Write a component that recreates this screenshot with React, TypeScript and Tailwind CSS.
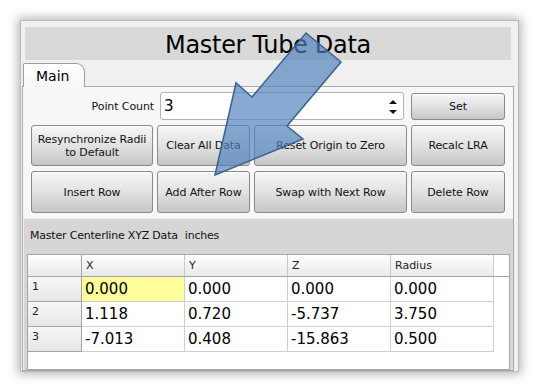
import React from 'react';

const rows = [
  ['0.000', '0.000', '0.000', '0.000'],
  ['1.118', '0.720', '-5.737', '3.750'],
  ['-7.013', '0.408', '-15.863', '0.500'],
];

const headers = ['X', 'Y', 'Z', 'Radius'];

function Btn({ children, className = '' }: { children: React.ReactNode; className?: string }) {
  return (
    <button
      type="button"
      className={`flex items-center justify-center text-center leading-[13px] text-[11px] tracking-[-0.1px] text-[#111] rounded-[3px] border border-[#8a8a8a] bg-gradient-to-b from-[#f6f6f6] via-[#e2e2e2] to-[#c6c6c6] shadow-[inset_0_1px_0_#ffffff] ${className}`}
    >
      {children}
    </button>
  );
}

export default function App() {
  return (
    <div className="relative w-[539px] h-[391px] overflow-hidden bg-white pt-[20px] pl-[20px] font-['DejaVu_Sans',sans-serif]">
      {/* Window */}
      <div className="w-[499px] h-[352px] border border-[#b9b9b9] bg-[#f0f0f0] shadow-[0_0_10px_2px_rgba(0,0,0,0.3)] flex flex-col overflow-hidden">
        {/* Title */}
        <div className="mt-[6px] ml-[4px] w-[486px] h-[33px] bg-[#d9d9d9] text-center text-[24px] tracking-[-0.3px] leading-[37px] text-black">
          Master Tube Data
        </div>

        {/* Tabs */}
        <div className="mt-[3px] h-[23px] flex pl-[2px]">
          <div className="relative z-10 w-[62px] h-[24px] border border-b-0 border-[#9d9d9d] rounded-tl-[2px] rounded-tr-[9px] bg-gradient-to-b from-white to-[#f7f7f7] pl-[12px] text-[14px] leading-[24px] text-black">
            Main
          </div>
        </div>

        {/* Tab pane */}
        <div className="ml-[1px] w-[492px] flex-1 border border-[#a9a9a9] bg-[#f7f7f7] flex flex-col">
          <div className="pl-[8px] pt-[5px]">
            {/* Point count row */}
            <div className="flex items-center h-[28px]">
              <div className="w-[123px] pt-[3px] text-right text-[11px] tracking-[-0.1px] text-[#111]">Point Count</div>
              <div className="relative ml-[6px] w-[244px] h-[28px] rounded-[3px] border border-[#b3b3b3] bg-white pl-[3px] text-[15px] leading-[26px] text-black">
                3
                <svg className="absolute right-[6px] top-[7px]" width="8" height="14" viewBox="0 0 8 14">
                  <polygon points="4,0 8,4 0,4" fill="#111" />
                  <polygon points="0,10 8,10 4,14" fill="#111" />
                </svg>
              </div>
              <Btn className="ml-[7px] w-[94px] h-[27px]">Set</Btn>
            </div>

            {/* Button grid */}
            <div className="mt-[5px] grid grid-cols-[122px_93px_153px_94px] gap-x-[4px] gap-y-[5px]">
              <Btn className="h-[41px]">
                Resynchronize Radii
                <br />
                to Default
              </Btn>
              <Btn className="h-[41px]">Clear All Data</Btn>
              <Btn className="h-[41px]">Reset Origin to Zero</Btn>
              <Btn className="h-[41px]">Recalc LRA</Btn>
              <Btn className="h-[42px]">Insert Row</Btn>
              <Btn className="h-[42px]">Add After Row</Btn>
              <Btn className="h-[42px]">Swap with Next Row</Btn>
              <Btn className="h-[42px]">Delete Row</Btn>
            </div>
          </div>

          {/* Centerline group */}
          <div className="mt-[5px] flex-1 flex flex-col bg-[#d6d6d6] border-t border-l border-[#efefef]">
            <div className="h-[35px] pl-[6px] flex items-center text-[11px] tracking-[-0.2px] text-[#111]">
              <span>Master Centerline XYZ Data</span>
              <span className="ml-[7px]">inches</span>
            </div>
            <div className="ml-[3px] mr-[3px] flex-1 border border-[#a5a5a5] bg-white">
              <div className="flex h-[22px] border-b border-[#a3a3a3]">
                <div className="w-[54px] border-r border-[#a3a3a3] bg-gradient-to-b from-white to-[#e9e9e9]" />
                {headers.map((h) => (
                  <div
                    key={h}
                    className="w-[103px] border-r border-[#c9c9c9] bg-gradient-to-b from-white to-[#e9e9e9] pl-[4px] text-[11px] leading-[21px] text-[#222]"
                  >
                    {h}
                  </div>
                ))}
              </div>
              {rows.map((r, i) => (
                <div key={i} className="flex h-[25px]">
                  <div className="w-[54px] border-r border-b border-[#a3a3a3] bg-gradient-to-b from-[#f7f7f7] to-[#e6e6e6] pl-[4px] pt-[3px] text-[11px] leading-[13px] text-[#222]">
                    {i + 1}
                  </div>
                  {r.map((v, j) => (
                    <div
                      key={j}
                      className={`w-[103px] border-r border-b border-[#cfcfcf] pl-[3px] text-[15px] leading-[24px] text-black ${
                        i === 0 && j === 0 ? 'bg-[#fdfd9c]' : ''
                      }`}
                    >
                      {v}
                    </div>
                  ))}
                </div>
              ))}
            </div>
          </div>
        </div>
      </div>

      {/* Callout arrow */}
      <svg className="absolute left-0 top-0 pointer-events-none" width="539" height="391" viewBox="0 0 539 391">
        <polygon
          points="306,33 341,62 287,126 303,139 215,175 236,83 252,97"
          fill="#4f81bd"
          fillOpacity="0.68"
          stroke="#3a6291"
          strokeWidth="1.5"
          strokeLinejoin="miter"
        />
      </svg>
    </div>
  );
}
